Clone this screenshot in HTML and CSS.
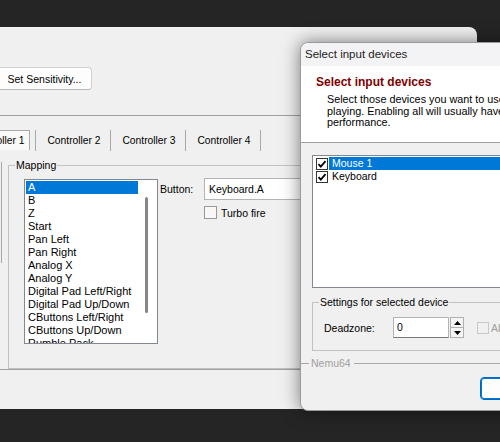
FILE: index.html
```html
<!DOCTYPE html>
<html lang="en">
<head>
    <meta charset="UTF-8">
    <title>Nemu64 - Input</title>
    <link rel="stylesheet" href="styles.css">
</head>
<body>
<div class="desktop">

    <!-- main input settings window (left edge is off screen) -->
    <div class="main-win">
        <div class="toolbar">
            <button class="btn">Set Sensitivity...</button>
        </div>
        <div class="rule"></div>

        <div class="tabs">
            <div class="tab active"><span>Controller 1</span></div>
            <div class="tab"><span>Controller 2</span></div>
            <div class="tab"><span>Controller 3</span></div>
            <div class="tab"><span>Controller 4</span></div>
        </div>

        <div class="tab-panel">
            <div class="side-box"></div>
            <fieldset class="group mapping">
                <legend>Mapping</legend>
                <div class="mapping-row">
                    <div class="listbox">
                        <ul>
                            <li class="sel">A</li>
                            <li>B</li>
                            <li>Z</li>
                            <li>Start</li>
                            <li>Pan Left</li>
                            <li>Pan Right</li>
                            <li>Analog X</li>
                            <li>Analog Y</li>
                            <li>Digital Pad Left/Right</li>
                            <li>Digital Pad Up/Down</li>
                            <li>CButtons Left/Right</li>
                            <li>CButtons Up/Down</li>
                            <li>Rumble Pack</li>
                        </ul>
                        <div class="thumb"></div>
                    </div>
                    <div class="binding">
                        <span class="lbl">Button:</span>
                        <div class="textbox">Keyboard.A</div>
                        <label class="check">
                            <span class="box"></span>Turbo fire
                        </label>
                    </div>
                </div>
            </fieldset>
        </div>
        <div class="rule"></div>
    </div>

    <!-- modal dialog -->
    <div class="dialog">
        <div class="titlebar">Select input devices</div>
        <div class="dlg-header">
            <h2>Select input devices</h2>
            <p>Select those devices you want to use when<br>
               playing. Enabling all will usually have worse<br>
               performance.</p>
        </div>
        <div class="dlg-body">
            <ul class="device-list">
                <li class="sel">
                    <svg class="cb" width="12" height="12" viewBox="0 0 12 12"><rect x="0.5" y="0.5" width="11" height="11" fill="#fff" stroke="#333"/><path d="M2.5 6.2 L4.8 8.6 L9.5 3.2" fill="none" stroke="#000" stroke-width="1.8"/></svg>
                    <span>Mouse 1</span>
                </li>
                <li>
                    <svg class="cb" width="12" height="12" viewBox="0 0 12 12"><rect x="0.5" y="0.5" width="11" height="11" fill="#fff" stroke="#333"/><path d="M2.5 6.2 L4.8 8.6 L9.5 3.2" fill="none" stroke="#000" stroke-width="1.8"/></svg>
                    <span>Keyboard</span>
                </li>
            </ul>

            <fieldset class="group settings">
                <legend>Settings for selected device</legend>
                <div class="dz-row">
                    <span class="dz-label">Deadzone:</span>
                    <div class="edit">0</div>
                    <div class="spin">
                        <div class="spin-btn"><svg width="7" height="4" viewBox="0 0 7 4"><path d="M0 4 L3.5 0 L7 4Z" fill="#000"/></svg></div>
                        <div class="spin-btn"><svg width="7" height="4" viewBox="0 0 7 4"><path d="M0 0 L3.5 4 L7 0Z" fill="#000"/></svg></div>
                    </div>
                    <label class="check disabled"><span class="box"></span>Absolute</label>
                </div>
            </fieldset>

            <div class="etched">
                <span class="line short"></span>
                <span class="brand">Nemu64</span>
                <span class="line"></span>
            </div>

            <div class="dlg-buttons">
                <button class="btn default">OK</button>
            </div>
        </div>
    </div>

</div>
</body>
</html>
```

FILE: styles.css
```css
* {
    box-sizing: border-box;
}
html, body {
    margin: 0;
    padding: 0;
}
body {
    background-color: #252525;
    font-family: "Liberation Sans", Arial, sans-serif;
    font-size: 10.5px;
    color: #000;
    overflow: hidden;
}
ul {
    list-style: none;
    margin: 0;
    padding: 0;
}
.desktop {
    position: relative;
    width: 500px;
    height: 442px;
    overflow: hidden;
}

/* main window */
.main-win {
    position: absolute;
    left: -50px;
    top: 27px;
    width: 527px;
    height: 382px;
    background-color: #f0f0f0;
    border-radius: 0 8px 0 0;
    padding-top: 40px;
}
.toolbar {
    height: 23px;
    padding-left: 47px;
}
.btn {
    font: inherit;
    color: #000;
    width: 95px;
    height: 23px;
    padding: 0;
    background-color: #fdfdfd;
    border: 1px solid #d0d0d0;
    border-bottom-color: #b8b8b8;
    border-radius: 4px;
}
.rule {
    height: 1px;
    margin-top: 25px;
    background-color: #a0a0a0;
}
.tab-panel + .rule {
    margin-top: 0;
}
.tabs {
    display: flex;
    height: 21px;
    margin: 14px 0 0 11px;
    font-size: 10.3px;
}
.tab {
    width: 75px;
    display: flex;
    align-items: center;
    justify-content: center;
    padding-left: 2px;
    border-right: 1px solid #a9a9a9;
}
.tab.active {
    align-items: flex-start;
    padding-left: 0;
}
.tab.active span {
    height: 20px;
    line-height: 20px;
    padding: 0 4px;
    background-color: #f9f9f9;
    border: 1px solid #a9a9a9;
    border-bottom: none;
}
.tab-panel {
    display: flex;
    height: 218px;
}
.side-box {
    width: 41px;
    height: 101px;
    margin: 11px 0 0 11px;
    border-right: 1px solid #a9a9a9;
}

/* group boxes */
.group {
    margin: 0;
    border: 1px solid #c2c2c2;
    min-width: 0;
}
.group legend {
    padding: 0 1px;
    line-height: 12px;
}
.mapping {
    width: 461px;
    margin: 8px 0 0 6px;
    padding: 8px 0 13px 15px;
}
.mapping legend {
    margin-left: -9px;
}
.mapping-row {
    display: flex;
}
.listbox {
    position: relative;
    width: 134px;
    height: 165px;
    padding: 1px;
    font-size: 11px;
    background-color: #fff;
    border: 1px solid #828790;
    overflow: hidden;
}
.listbox li {
    width: 112px;
    height: 13px;
    line-height: 13px;
    padding-left: 2px;
    white-space: nowrap;
}
.listbox li.sel,
.device-list li.sel span {
    background-color: #0078d7;
    color: #fff;
}
.thumb {
    position: absolute;
    left: 120px;
    top: 17px;
    width: 3px;
    height: 116px;
    border-radius: 2px;
    background-color: #868686;
}
.binding {
    display: grid;
    grid-template-columns: 44px 130px;
    grid-template-rows: 22px auto;
    align-content: start;
    margin: -1px 0 0 2px;
}
.binding .lbl {
    align-self: center;
}
.textbox {
    line-height: 20px;
    padding-left: 4px;
    background-color: #fff;
    border: 1px solid #b4b4b4;
}
.check {
    display: flex;
    align-items: center;
    gap: 4px;
    height: 13px;
}
.binding .check {
    grid-column: 2;
    margin-top: 6px;
}
.check .box {
    width: 13px;
    height: 13px;
    background-color: #f7f7f7;
    border: 1px solid #999;
}

/* dialog */
.dialog {
    position: absolute;
    left: 300px;
    top: 42px;
    width: 250px;
    height: 369px;
    background-color: #f0f0f0;
    border: 1px solid #9a9a9a;
    border-radius: 8px;
    box-shadow: 0 0 18px rgba(0, 0, 0, 0.5);
    overflow: hidden;
    white-space: nowrap;
}
.titlebar {
    height: 23px;
    line-height: 23px;
    padding-left: 4px;
    font-size: 11.5px;
    color: #1b1b1b;
    background-color: #f3f3f5;
}
.dlg-header {
    height: 77px;
    padding: 9px 0 0 15px;
    background-color: #fff;
    border-bottom: 1px solid #a0a0a0;
}
.dlg-header h2 {
    margin: 0;
    font-size: 12px;
    line-height: 14px;
    color: #800000;
}
.dlg-header p {
    margin: 5px 0 0 11px;
    font-size: 10.8px;
    line-height: 11.5px;
}
.dlg-body {
    padding: 12px 0 0 11px;
}
.device-list {
    height: 133px;
    padding: 1px;
    background-color: #fff;
    border: 1px solid #828790;
}
.device-list li {
    display: flex;
    align-items: center;
    height: 13px;
}
.device-list .cb {
    margin: 0 1px 0 2px;
}
.device-list li span {
    flex: 1;
    height: 13px;
    line-height: 13px;
    padding-left: 3px;
}
.settings {
    margin-top: 8px;
    padding: 9px 0 12px 11px;
}
.settings legend {
    margin-left: -5px;
}
.dz-row {
    display: flex;
    align-items: center;
    height: 21px;
}
.dz-label {
    width: 69px;
}
.edit {
    width: 56px;
    height: 21px;
    line-height: 19px;
    padding-left: 3px;
    background-color: #fff;
    border: 1px solid #b4b4b4;
    border-bottom-color: #7a7a7a;
}
.spin {
    width: 14px;
    height: 21px;
    margin-left: 1px;
    display: flex;
    flex-direction: column;
}
.spin-btn {
    flex: 1;
    display: flex;
    align-items: center;
    justify-content: center;
    background-color: #f4f4f4;
    border: 1px solid #b0b0b0;
}
.spin-btn + .spin-btn {
    border-top: none;
}
.dz-row .check {
    margin-left: 13px;
    gap: 2px;
}
.check.disabled {
    color: #a0a0a0;
}
.check.disabled .box {
    width: 12px;
    height: 12px;
    border-color: #c8c8c8;
    background-color: #f0f0f0;
}
.etched {
    display: flex;
    align-items: center;
    height: 12px;
    margin: 6px 0 0 -11px;
    color: #a0a0a0;
}
.etched .line {
    flex: 1;
    height: 1px;
    background-color: #a8a8a8;
}
.etched .line.short {
    flex: none;
    width: 8px;
}
.etched .brand {
    margin: 0 3px 0 2px;
}
.dlg-buttons {
    margin: 8px 0 0 168px;
}
.btn.default {
    width: 75px;
    border: 1px solid #0067c0;
    box-shadow: inset 0 0 0 1px #0078d7;
}
```
